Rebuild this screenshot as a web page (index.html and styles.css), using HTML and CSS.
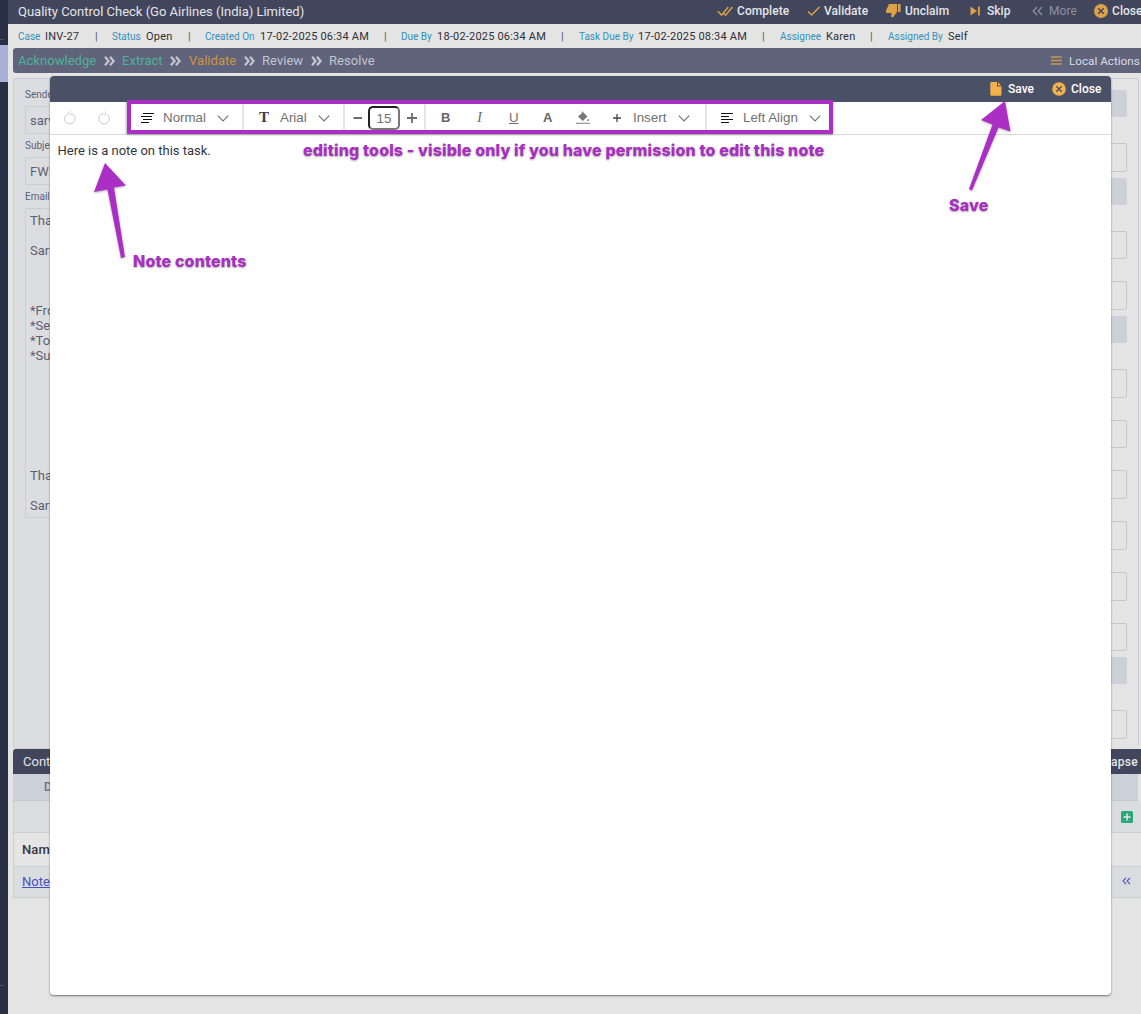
FILE: index.html
```html
<!DOCTYPE html>
<html lang="en">
<head>
<meta charset="utf-8">
<title>Quality Control Check</title>
<link rel="stylesheet" href="styles.css">
</head>
<body>
<div class="app">
  <nav class="rail"><span class="rail-line"></span><span class="rail-active"></span><span class="rail-space"></span><span class="rail-line"></span></nav>
  <main class="main">
    <header class="titlebar">
      <h1 class="title">Quality Control Check (Go Airlines (India) Limited)</h1>
      <div class="actions">
        <svg width="17" height="12" viewBox="0 0 17 12" class="line gold"><path d="M1 6.200l3.500 4L11.300 2M6.500 8.200l2 2L15.500 2"/></svg><span>Complete</span>
        <svg width="14" height="12" viewBox="0 0 14 12" class="line gold"><path d="M1 6.500l3.600 3.500L12.500 2"/></svg><span>Validate</span>
        <svg width="15" height="14" viewBox="0 0 15 14" class="solid gold"><path d="M3 0h8v8L7 13.500 5 12.500 5.600 9H0V6.500zM12 0H14.500v8h-2.500z"/></svg><span>Unclaim</span>
        <svg width="11" height="10" viewBox="0 0 11 10" class="solid gold"><path d="M.5.500l6.500 4.500L.5 9.500zM8 .5h1.800v9H8z"/></svg><span>Skip</span>
        <svg width="12" height="10" viewBox="0 0 12 10" class="line thin muted"><path d="M5 1L1.200 5 5 9M10 1L6.200 5 10 9"/></svg><span class="muted">More</span>
        <svg width="14" height="14" viewBox="0 0 14 14"><circle cx="7" cy="7" r="7" fill="#dba247"/><path d="M4.200 4.200l5.600 5.600M9.800 4.200L4.200 9.800" stroke="#42465c" stroke-width="1.400"/></svg><span>Close</span>
      </div>
    </header>
    <div class="meta">
      <label>Case</label><span>INV-27</span><i>|</i>
      <label>Status</label><span>Open</span><i>|</i>
      <label>Created On</label><span>17-02-2025 06:34 AM</span><i>|</i>
      <label>Due By</label><span>18-02-2025 06:34 AM</span><i>|</i>
      <label>Task Due By</label><span>17-02-2025 08:34 AM</span><i>|</i>
      <label>Assignee</label><span>Karen</span><i>|</i>
      <label>Assigned By</label><span>Self</span>
    </div>
    <div class="steps">
      <div class="step-list">
        <span class="done">Acknowledge</span>
        <svg class="sep" width="12" height="10" viewBox="0 0 12 10"><path d="M1 .7l3.600 4.300-3.600 4.300M6 .7l3.600 4.300-3.600 4.300"/></svg>
        <span class="done">Extract</span>
        <svg class="sep" width="12" height="10" viewBox="0 0 12 10"><path d="M1 .7l3.600 4.300-3.600 4.300M6 .7l3.600 4.300-3.600 4.300"/></svg>
        <span class="current">Validate</span>
        <svg class="sep" width="12" height="10" viewBox="0 0 12 10"><path d="M1 .7l3.600 4.300-3.600 4.300M6 .7l3.600 4.300-3.600 4.300"/></svg>
        <span>Review</span>
        <svg class="sep" width="12" height="10" viewBox="0 0 12 10"><path d="M1 .7l3.600 4.300-3.600 4.300M6 .7l3.600 4.300-3.600 4.300"/></svg>
        <span>Resolve</span>
      </div>
      <div class="local"><svg width="11" height="9" viewBox="0 0 11 9"><path d="M0 1h11M0 4.500h11M0 8h11" stroke="#c9984f" stroke-width="1.500"/></svg><span>Local Actions</span></div>
    </div>
    <div class="panels">
      <section class="email">
        <div class="label">Sender</div><div class="input">sarv</div>
        <div class="label">Subject</div><div class="input">FW:</div>
        <div class="label">Email</div>
        <div class="textarea">Thanks

Sarv



*From:
*Sent:
*To:
*Subject:







Thanks

Sarv</div>
      </section>
      <section class="fields">
        <div class="chip"></div><div class="field"></div>
        <div class="chip"></div><div class="field"></div><div class="field"></div>
        <div class="chip"></div><div class="field"></div><div class="field"></div><div class="field"></div><div class="field"></div><div class="field"></div><div class="field"></div>
        <div class="chip"></div><div class="field"></div>
      </section>
    </div>
    <section class="context">
      <div class="context-head"><span>Context</span><b>Collapse</b></div>
      <div class="tabs"><span>Documents</span></div>
      <div class="row add"><svg width="12" height="12" viewBox="0 0 12 12"><rect width="12" height="12" rx="1.500" fill="#2fa67a"/><path d="M6 2.500v7M2.500 6h7" stroke="#e4e8e6" stroke-width="1.500"/></svg></div>
      <div class="row names"><b>Name</b></div>
      <div class="row item"><a>Notes</a><svg width="9" height="8" viewBox="0 0 9 8"><path d="M4 .8L1 4l3 3.200M8 .8L5 4l3 3.200"/></svg></div>
    </section>
  </main>
</div>

<div class="modal">
  <header class="modal-head">
    <svg width="12" height="14" viewBox="0 0 12 14"><path d="M1.500 0H7v4.500h4.500V12.500a1.200 1.200 0 0 1-1.200 1.200H1.500A1.200 1.200 0 0 1 .3 12.500V1.200A1.200 1.200 0 0 1 1.500 0zM8 .3L11.300 3.600H8z" fill="#f3b14c"/></svg><span>Save</span>
    <svg width="14" height="14" viewBox="0 0 14 14"><circle cx="7" cy="7" r="6.800" fill="#f3b14c"/><path d="M4.300 4.300l5.400 5.400M9.700 4.300L4.300 9.700" stroke="#4a5065" stroke-width="1.400"/></svg><span>Close</span>
  </header>
  <div class="toolbar">
    <div class="group history">
      <svg width="14" height="14" viewBox="0 0 14 14"><path d="M4 3.200A5.300 5.300 0 1 0 7.500 2.400M7 .3L5 2.500 7 4.600"/></svg>
      <svg width="14" height="14" viewBox="0 0 14 14"><path d="M10 3.200A5.300 5.300 0 1 1 6.500 2.400M7 .3L9 2.500 7 4.600"/></svg>
    </div>
    <div class="group block"><svg width="13" height="12" viewBox="0 0 13 12"><path d="M2 1.500h11M0 4.500h11M2 7.500h9M0 10.500h8" class="ink"/></svg><span>Normal</span><svg class="chev" width="12" height="7" viewBox="0 0 12 7"><path d="M.7.700L6 6 11.300.7"/></svg></div>
    <div class="group font"><b class="serif">T</b><span>Arial</span><svg class="chev" width="12" height="7" viewBox="0 0 12 7"><path d="M.7.700L6 6 11.300.7"/></svg></div>
    <div class="group size"><svg width="10" height="10" viewBox="0 0 10 10"><path d="M.5 5h8.500"/></svg><span class="number">15</span><svg width="10" height="10" viewBox="0 0 10 10"><path d="M0 5h10M5 0v10"/></svg></div>
    <div class="group format">
      <b>B</b><em>I</em><u>U</u><b class="color">A</b>
      <svg width="14" height="13" viewBox="0 0 14 13"><path d="M6 0l5.500 5.500L6.800 10 2 5.500 6 2zM12 7.500c1.300 1.800 1.300 2.500 0 2.500s-1.300-.7 0-2.500z" fill="#777"/><path d="M0 12.300h14" stroke="#999" stroke-width="1.200"/></svg>
      <svg width="8" height="8" viewBox="0 0 8 8"><path d="M0 4h8M4 0v8" stroke="#444" stroke-width="1.300"/></svg>
      <span>Insert</span><svg class="chev" width="12" height="7" viewBox="0 0 12 7"><path d="M.7.700L6 6 11.300.7"/></svg>
    </div>
    <div class="group align"><svg width="13" height="12" viewBox="0 0 13 12"><path d="M0 1.500h12M0 4.500h8M0 7.500h12M0 10.500h8" class="ink"/></svg><span>Left Align</span><svg class="chev" width="12" height="7" viewBox="0 0 12 7"><path d="M.7.700L6 6 11.300.7"/></svg></div>
  </div>
  <div class="note">Here is a note on this task.</div>
</div>

<div class="mark frame"></div>
<div class="mark caption tools">editing tools - visible only if you have permission to edit this note</div>
<div class="mark caption contents">Note contents</div>
<div class="mark caption save">Save</div>
<svg class="mark arrows" width="1141" height="300" viewBox="0 0 1141 300"><path d="M105 163L126 185.500 114 187.500 125 257 121 258 107.500 189.500 94 192z"/><path d="M1005 101L1010.500 131.500 998.500 127.500 972 190.500 969 189 992.500 124.500 981 120z"/></svg>
</body>
</html>
```
FILE: styles.css
```css
* { box-sizing: border-box; }
body { margin: 0; width: 1141px; height: 1014px; overflow: hidden; position: relative; background: #e4e4e4; font-family: Roboto, "Liberation Sans", sans-serif; color: #33363f; }
svg { display: block; flex: none; }
.app { display: flex; height: 1014px; }
.rail { width: 8px; flex: none; background: #293046; display: flex; flex-direction: column; padding-top: 39px; }
.rail-line { width: 4px; height: 1px; background: #4c5265; flex: none; }
.rail-active { height: 37px; margin-top: 5px; background: #a9b2d6; flex: none; }
.rail-space { height: 903px; flex: none; }
.main { width: 1133px; flex: none; overflow: hidden; }

.titlebar { height: 24px; background: #42465c; display: flex; align-items: center; justify-content: space-between; padding: 0 0 2px 10px; color: #e4e5e9; }
.title { margin: 0; font-size: 13px; font-weight: 400; white-space: nowrap; }
.actions { display: grid; grid-template-columns: 20px 70px 17px 62px 19px 65px 17px 45px 17px 45px 18px 29px; align-items: center; font-size: 12px; font-weight: 500; letter-spacing: 0.050px; white-space: nowrap; height: 22px; }
.line { fill: none; stroke: currentColor; stroke-width: 1.500; }
.line.thin { stroke-width: 1.300; }
.solid { fill: currentColor; }
.gold { color: #dba247; }
.muted { color: #8d90a0; font-weight: 400; }

.meta { height: 24px; padding-left: 10px; display: grid; grid-template-columns: 27px 50px 17px 34px 42px 17px 55px 124px 17px 36px 124px 18px 59px 124px 18px 46px 44px 18px 60px 30px; align-items: center; white-space: nowrap; font-size: 11px; color: #2d3038; }
.meta span { letter-spacing: 0.200px; }
.meta label { font-size: 10px; color: #3291bd; }
.meta i { font-style: normal; color: #555862; }

.steps { height: 25px; margin-left: 5px; background: #5f637c; border-radius: 3px 0 0 3px; display: flex; align-items: center; justify-content: space-between; color: #c3c5cf; font-size: 13px; white-space: nowrap; }
.step-list { display: grid; grid-template-columns: 86px 18px 48px 19px 55px 18px 49px 18px 60px; align-items: center; padding-left: 5px; letter-spacing: 0.040px; }
.done { color: #4eb394; }
.current { color: #d0953f; }
.sep { fill: none; stroke: #c3c5cf; stroke-width: 2.200; }
.local { display: flex; align-items: center; gap: 7px; width: 90px; font-size: 11.700px; color: #dcdde3; }

.panels { height: 671px; margin: 5px 2px 0 5px; display: flex; }
.email { width: 500px; height: 671px; border: 1px solid #c9ccd6; border-radius: 3px; background: #dcdde0; padding: 10px 11px; color: #5c6072; }
.label { height: 12px; line-height: 12px; font-size: 10px; margin-bottom: 5px; }
.input { height: 28px; margin-bottom: 6px; border: 1px solid #cbccd4; border-radius: 2px; padding-left: 4px; font-size: 13px; line-height: 27px; }
.textarea { height: 310px; border: 1px solid #cbccd4; border-radius: 2px; padding: 4px; font-size: 13px; line-height: 15px; white-space: pre; }
.fields { flex: 1; height: 668px; border: 1px solid #cccdd2; border-bottom: 0; border-radius: 3px; padding: 11px 11px 0 400px; }
.chip { height: 27px; margin-top: 6px; border-radius: 2px; background: #ccd1d9; }
.chip:first-child { margin-top: 0; }
.field { height: 28.700px; margin-top: 22px; border: 1px solid #c5c7cb; border-radius: 2px; }
.chip + .field { margin-top: 26px; }

.context { margin-left: 5px; }
.context-head { height: 25px; background: #42465c; border-radius: 3px 0 0 0; display: flex; align-items: center; justify-content: space-between; padding: 0 3px 0 10px; font-size: 13px; color: #e4e5e9; }
.context-head b { font-size: 12px; font-weight: 500; letter-spacing: 0.300px; }
.tabs { height: 27px; margin-right: 3px; background: #cdd1d9; border-bottom: 1px solid #c4c8d0; padding-left: 31px; font-size: 12px; line-height: 26px; font-weight: 500; color: #6b7080; }
.row { display: flex; align-items: center; justify-content: space-between; padding-left: 8px; border-bottom: 1px solid #ccced6; border-left: 1px solid #ccced6; font-size: 13px; }
.add { height: 32px; background: #dadddf; justify-content: flex-end; padding-right: 8px; }
.names { height: 34px; background: #e5e5e5; }
.names b { font-weight: 500; letter-spacing: 0.100px; }
.item { height: 31px; background: #dadddf; padding: 0 10px 2px 8px; }
.item a { color: #4450c4; text-decoration: underline; }
.item path { fill: none; stroke: #4c55c0; stroke-width: 1.200; }

.modal { position: absolute; left: 50px; top: 76px; width: 1061px; height: 919px; background: #fff; border-radius: 4px; box-shadow: 0 1px 2px rgba(0,0,0,.5); overflow: hidden; }
.modal-head { height: 26px; background: #4a5065; color: #fff; display: grid; grid-template-columns: 18px 44px 19px 40px; justify-content: end; align-items: center; font-size: 12px; font-weight: 500; }
.toolbar { height: 33px; border-bottom: 1px solid #d8d9dc; display: flex; font-family: "Liberation Sans", Arial, sans-serif; font-size: 13.330px; color: #707070; }
.group { height: 32px; padding-bottom: 1px; display: grid; align-items: center; border-right: 2px solid #e3e4ea; white-space: nowrap; flex: none; }
.history { width: 77px; grid-template-columns: 34px 20px; padding-left: 13px; }
.history path { fill: none; stroke: #c8c8c8; stroke-width: 1; }
.block { width: 117px; grid-template-columns: 22px 54px 20px; padding-left: 14px; }
.font { width: 101px; grid-template-columns: 21px 38px 20px; padding-left: 15px; }
.size { width: 81px; grid-template-columns: 17px 37px 10px; padding-left: 8px; }
.size path { stroke: #6d6d6d; stroke-width: 1.800; }
.format { width: 281px; grid-template-columns: 35px 33px 34px 33px 37px 20px 45px 20px; padding-left: 15px; }
.align { border: 0; grid-template-columns: 22px 66px 20px; padding-left: 14px; }
.ink { stroke: #111; stroke-width: 1.200; }
.chev { fill: none; stroke: #777; stroke-width: 1.200; margin-top: 2px; }
.serif { font: bold 15px "Liberation Serif", serif; color: #3d3d3d; }
.number { width: 32px; height: 24px; border: 2px solid #777; border-top-color: #222; border-left-color: #222; border-radius: 5px; text-align: center; line-height: 21px; margin-left: -2px; margin-top: 1px; }
.format b { font-size: 13px; color: #666; }
.format em { font: italic 15px "Liberation Serif", serif; padding-left: 1px; }
.note { padding: 8px 7.500px; font-size: 13px; line-height: 16px; color: #33363f; }

.mark { position: absolute; }
.frame { left: 127px; top: 100px; width: 706px; height: 34px; border: 4px solid #ab2fc4; box-shadow: 0 1px 2px rgba(0,0,0,.3); }
.caption { font-family: Inter, sans-serif; font-size: 16px; font-weight: 800; line-height: 20px; letter-spacing: 0.140px; color: #a92fc1; white-space: nowrap; text-shadow: 0 1px 2px rgba(0,0,0,.35); }
.tools { left: 303px; top: 140px; }
.contents { left: 133px; top: 251px; }
.save { left: 949px; top: 195px; }
.arrows { left: 0; top: 0; fill: #ab2fc4; filter: drop-shadow(0 1px 1px rgba(0,0,0,.3)); }
```
